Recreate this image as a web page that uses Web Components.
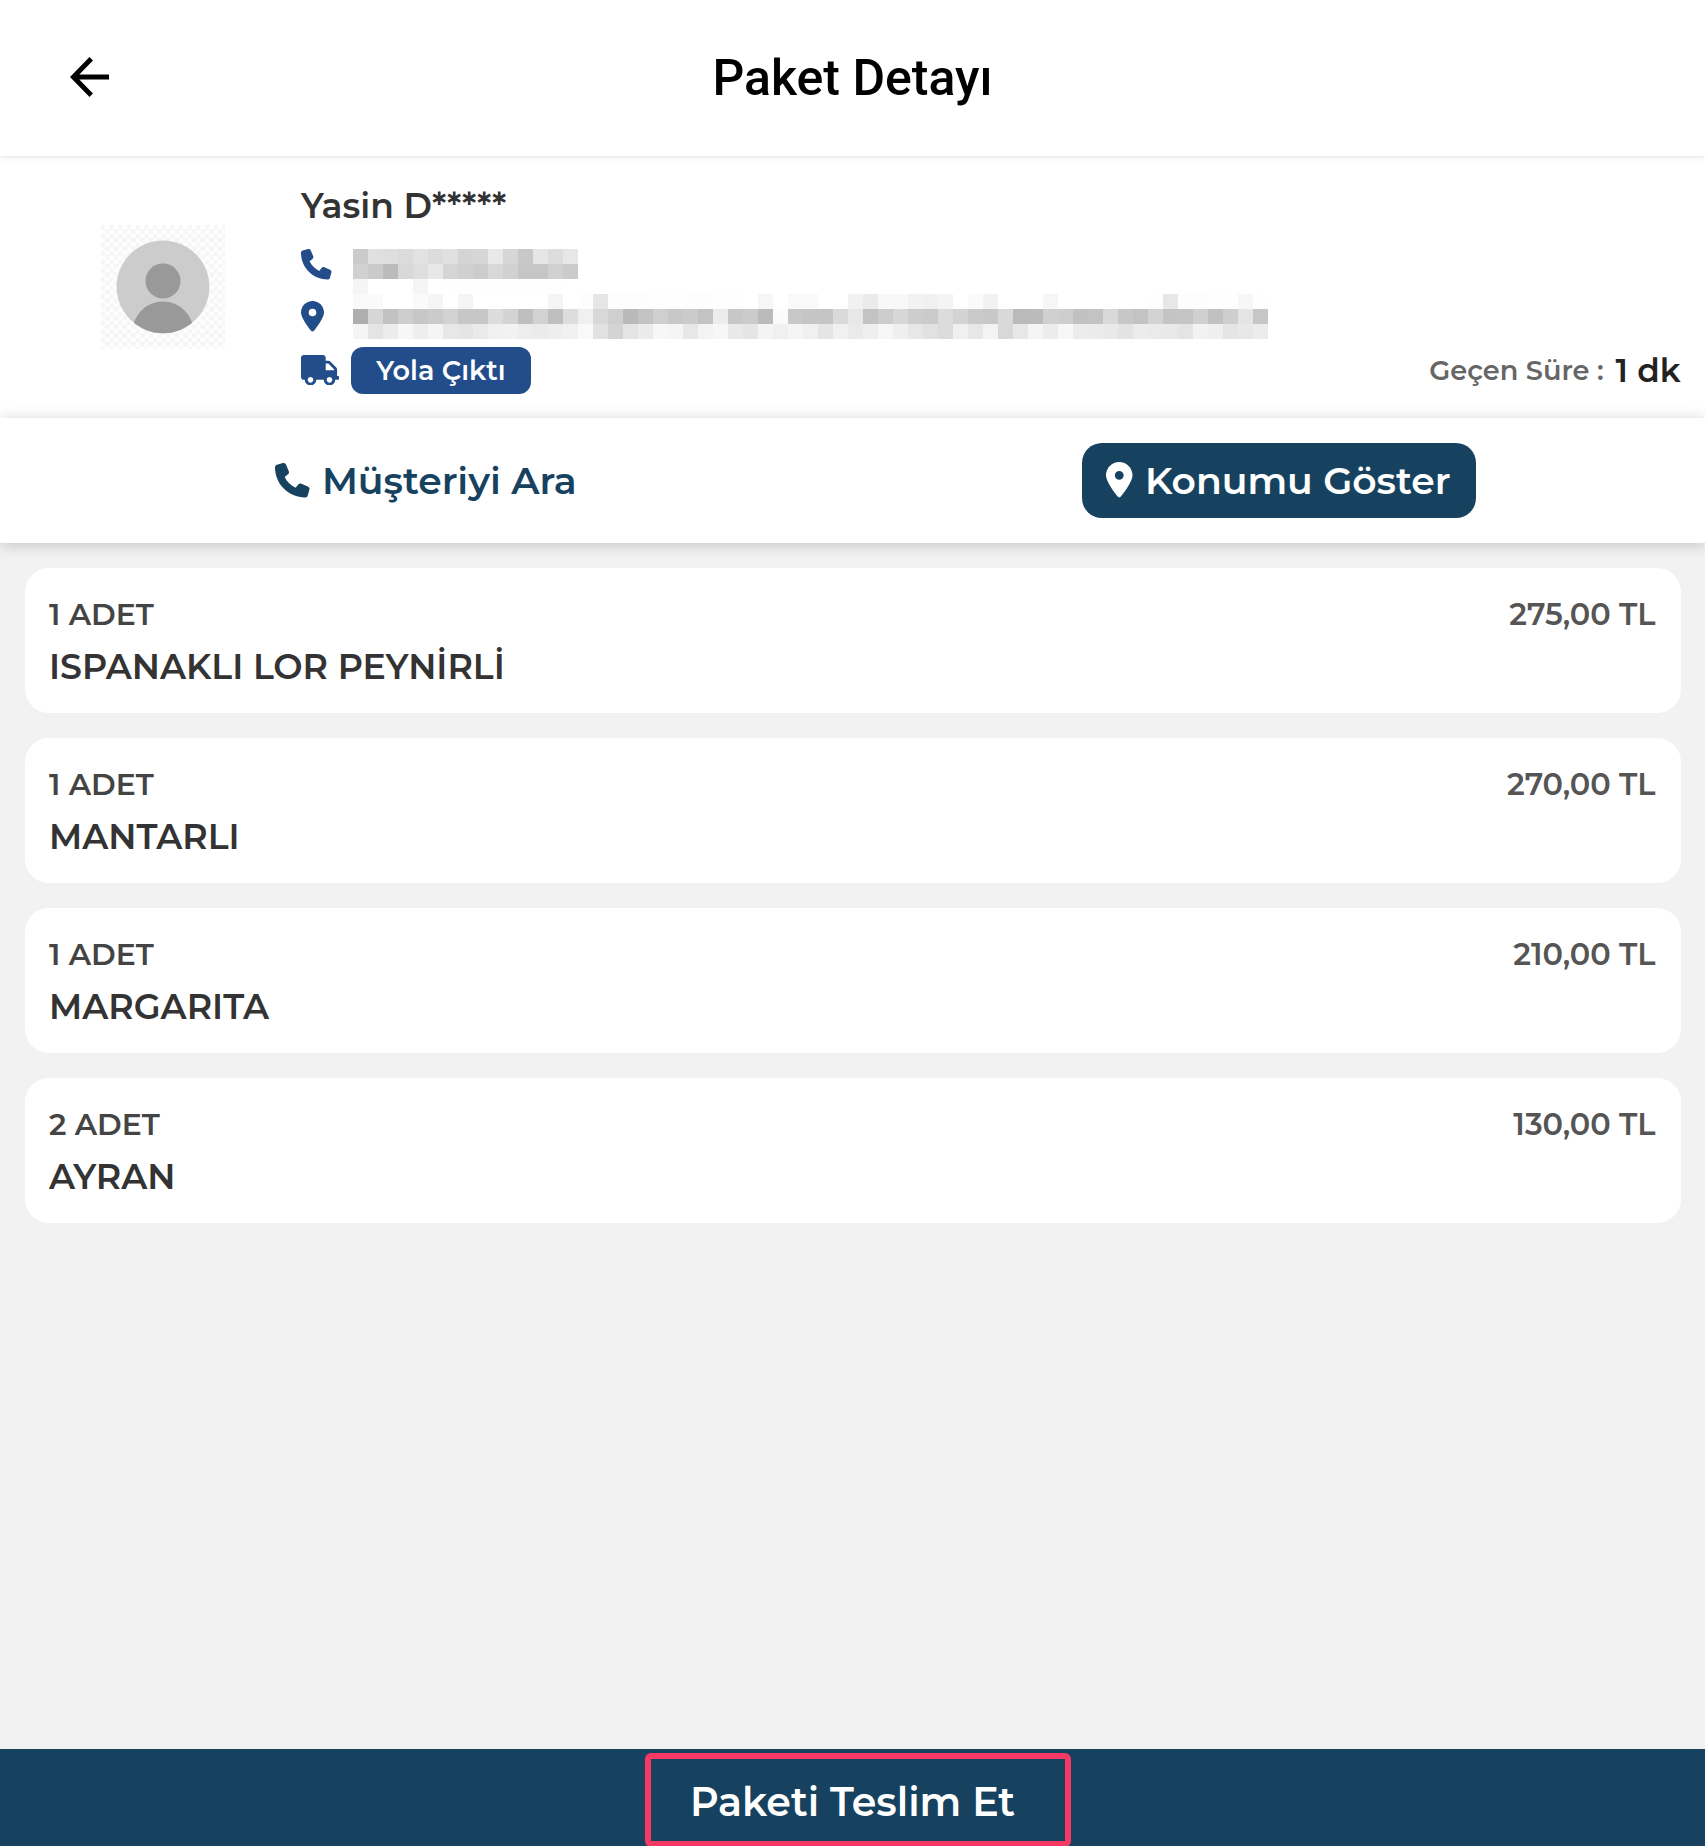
<!DOCTYPE html>
<html lang="tr">
<head>
<meta charset="utf-8">
<title>Paket Detayı</title>
<style>
	html, body {
		margin: 0;
		height: 100%;
	}
	body {
		font-family: Montserrat, Inter, sans-serif;
		font-weight: 600;
		color: #333;
		background: #f2f2f2;
		overflow: hidden;
		--navy: #17425f;
		--blue: #224c8a;
	}
</style>
</head>
<body>

<package-page>
	<page-header slot="header">Paket Detayı</page-header>
	<customer-panel slot="customer">
		<span slot="name">Yasin D*****</span>
		<span slot="status">Yola Çıktı</span>
		<span slot="label">Geçen Süre :</span>
		<span slot="time">1 dk</span>
	</customer-panel>
	<action-bar slot="actions">
		<action-button icon="phone">Müşteriyi Ara</action-button>
		<action-button icon="pin" filled>Konumu Göster</action-button>
	</action-bar>
	<order-item count="1 ADET" price="275,00 TL">ISPANAKLI LOR PEYNİRLİ</order-item>
	<order-item count="1 ADET" price="270,00 TL">MANTARLI</order-item>
	<order-item count="1 ADET" price="210,00 TL">MARGARITA</order-item>
	<order-item count="2 ADET" price="130,00 TL">AYRAN</order-item>
	<deliver-button slot="footer">Paketi Teslim Et</deliver-button>
</package-page>

<script>
(function() {
	"use strict";

	const ICONS = {
		back: {
			box: "4 4 16 16",
			path: "M20 11H7.83l5.59-5.59L12 4l-8 8 8 8 1.41-1.41L7.83 13H20z"
		},
		phone: {
			box: "0 0 512 512",
			path: "M164.9 24.6c-7.7-18.6-28-28.5-47.4-23.2l-88 24C12.1 30.2 0 46 0 64C0 311.4 200.6 512 448 512c18 0 33.8-12.1 38.6-29.5l24-88c5.3-19.4-4.6-39.7-23.2-47.4l-96-40c-16.3-6.8-35.2-2.1-46.3 11.6L304.7 368C234.3 334.7 177.3 277.7 144 207.3L193.3 167c13.7-11.2 18.4-30 11.6-46.3l-40-96z"
		},
		pin: {
			box: "0 0 384 512",
			path: "M215.7 499.2C267 435 384 279.4 384 192C384 86 298 0 192 0S0 86 0 192c0 87.4 117 243 168.3 307.2c12.3 15.3 35.1 15.3 47.4 0zM192 128a64 64 0 1 1 0 128 64 64 0 1 1 0-128z"
		},
		truck: {
			box: "0 0 640 512",
			path: "M624 352h-16V243.9c0-12.7-5.1-24.9-14.1-33.9L494 110.1c-9-9-21.2-14.1-33.9-14.1H416V48c0-26.5-21.5-48-48-48H48C21.5 0 0 21.5 0 48v320c0 26.5 21.5 48 48 48h16c0 53 43 96 96 96s96-43 96-96h128c0 53 43 96 96 96s96-43 96-96h48c8.8 0 16-7.2 16-16v-32c0-8.8-7.2-16-16-16zM160 464c-26.5 0-48-21.5-48-48s21.5-48 48-48 48 21.5 48 48-21.5 48-48 48zm320 0c-26.5 0-48-21.5-48-48s21.5-48 48-48 48 21.5 48 48-21.5 48-48 48zm80-208H416V144h44.1l99.9 99.9V256z"
		}
	};

	// one grey level per 15px cell, two hex digits each
	const MOSAIC = [
		"cbe0dedbe2dce0d4d6e9d6c8e6dde7",
		"d1cabbd8dee8d5d0ccd8d1c6c6d1cb",
		"f5fffffff5fffefefefefefefefe",
		"f9fafffffaf5fff5fffffffffff5fffde6fdfdfdfefefdfdfefefff6fff9f9fffff1ebf8f8f2f0f4fffaf2fffffff6fffffffffffffee7fdfdfefef7fefef6",
		"aed6c2cec7cbd2c7c7dcd3bfd2bfddf0d8cfb9c3cfc8cbc3ecc7cbbbfbc8c5c5dae7c3cdd7cdcbdcd3cac8d9babbd0cec1c3d9c7c3d3c4c5d0c1cee4c6",
		"f5e4ecf7eef5e7e5eaf0f2edebeef1f9e1d4e4ebf7f5e7f3f7e9e5f4f0f5f0e5f0eaeff6efe7e1dcf0e7f3d8e7f5ecf7ecebe9e3eceae9e4f2efe5e8ec"
	];

	function attach(el, html) {
		const template = document.createElement("template");
		template.innerHTML = html;
		el.attachShadow({ mode: "open" }).appendChild(template.content.cloneNode(true));
	}

	class UiIcon extends HTMLElement {
		connectedCallback() {
			const icon = ICONS[this.getAttribute("name")];
			attach(this, `
				<style>
					:host { display: block; flex: none; }
					svg { display: block; width: 100%; height: 100%; }
				</style>
				<svg viewBox="${icon.box}" preserveAspectRatio="none" fill="currentColor" fill-rule="evenodd"><path d="${icon.path}"/></svg>
			`);
		}
	}

	class PackagePage extends HTMLElement {
		connectedCallback() {
			attach(this, `
				<style>
					:host {
						display: flex;
						flex-direction: column;
						height: 100vh;
					}
					main {
						flex: 1;
						display: flex;
						flex-direction: column;
						gap: 25px;
						padding: 24.5px;
					}
				</style>
				<slot name="header"></slot>
				<slot name="customer"></slot>
				<slot name="actions"></slot>
				<main><slot></slot></main>
				<slot name="footer"></slot>
			`);
		}
	}

	class PageHeader extends HTMLElement {
		connectedCallback() {
			attach(this, `
				<style>
					:host {
						display: grid;
						grid-template-columns: 1fr auto 1fr;
						align-items: center;
						height: 156px;
						background: #fff;
						position: relative;
						z-index: 1;
						box-shadow: 0 1px 2px rgba(0, 0, 0, .07), 0 2px 9px rgba(0, 0, 0, .05);
					}
					ui-icon {
						width: 39px;
						height: 40px;
						margin: 0 0 2px 69.5px;
						color: #000;
					}
					h1 {
						margin: 0;
						font: 500 50px Roboto, sans-serif;
						color: #000;
					}
				</style>
				<ui-icon name="back"></ui-icon>
				<h1><slot></slot></h1>
			`);
		}
	}

	class UserAvatar extends HTMLElement {
		connectedCallback() {
			attach(this, `
				<style>
					:host {
						display: block;
						width: 124.5px;
						height: 124.5px;
						background: repeating-conic-gradient(#fff 0 25%, #f6f6f6 0 50%) 0 0 / 8.7px 8.7px;
					}
					svg { display: block; }
				</style>
				<svg width="124.5" height="124.5" viewBox="0 0 124.5 124.5">
					<clipPath id="face"><circle cx="62" cy="61.8" r="46.4"/></clipPath>
					<g clip-path="url(#face)">
						<rect width="124.5" height="124.5" fill="#ccc"/>
						<circle cx="62" cy="56" r="17.5" fill="#999"/>
						<circle cx="62" cy="107" r="30.5" fill="#999"/>
					</g>
				</svg>
			`);
		}
	}

	class MosaicText extends HTMLElement {
		connectedCallback() {
			let cells = "";
			MOSAIC.forEach((row, y) => {
				row.match(/../g).forEach((level, x) => {
					cells += `<rect x="${x * 15}" y="${y * 15}" width="15" height="15" fill="#${level.repeat(3)}"/>`;
				});
			});
			attach(this, `
				<style>
					:host { display: block; }
					svg { display: block; }
				</style>
				<svg width="915" height="90" shape-rendering="crispEdges">${cells}</svg>
			`);
		}
	}

	class CustomerPanel extends HTMLElement {
		connectedCallback() {
			attach(this, `
				<style>
					:host {
						display: grid;
						grid-template-columns: 276px 1fr;
						height: 261.5px;
						box-sizing: border-box;
						padding: 0 24.5px 0 25px;
						background: #fff;
					}
					user-avatar { place-self: center; }
					.info { padding-top: 20px; }
					.name {
						height: 62.5px;
						line-height: 60px;
						font-size: 34.5px;
					}
					.contact {
						display: grid;
						grid-template-columns: 52px 1fr;
						grid-template-rows: 52px 52px;
						align-items: center;
						color: var(--blue);
					}
					.contact ui-icon[name="phone"] { width: 30.5px; height: 30.5px; }
					.contact ui-icon[name="pin"] { width: 23px; height: 30.5px; }
					mosaic-text { grid-area: 1 / 2 / 3 / 3; align-self: start; margin-top: 10.5px; }
					.status {
						display: flex;
						align-items: center;
						height: 47px;
						margin-top: 4px;
						color: var(--blue);
					}
					.status ui-icon { width: 38px; height: 30.5px; }
					.badge {
						width: 180px;
						margin-left: 12px;
						line-height: 47px;
						border-radius: 12px;
						background: var(--blue);
						color: #fff;
						font-size: 27.1px;
						text-align: center;
					}
					.label {
						margin-left: auto;
						font-size: 27.2px;
						color: #666;
					}
					.time {
						margin-left: 12px;
						font-size: 32.8px;
						color: #222;
					}
				</style>
				<user-avatar></user-avatar>
				<div class="info">
					<div class="name"><slot name="name"></slot></div>
					<div class="contact">
						<ui-icon name="phone"></ui-icon>
						<mosaic-text></mosaic-text>
						<ui-icon name="pin"></ui-icon>
					</div>
					<div class="status">
						<ui-icon name="truck"></ui-icon>
						<div class="badge"><slot name="status"></slot></div>
						<div class="label"><slot name="label"></slot></div>
						<div class="time"><slot name="time"></slot></div>
					</div>
				</div>
			`);
		}
	}

	class ActionBar extends HTMLElement {
		connectedCallback() {
			attach(this, `
				<style>
					:host {
						display: grid;
						grid-template-columns: 1fr 1fr;
						place-items: center;
						height: 125.5px;
						background: #fff;
						position: relative;
						box-shadow: 0 2px 14px rgba(0, 0, 0, .2);
					}
				</style>
				<slot></slot>
			`);
		}
	}

	class ActionButton extends HTMLElement {
		connectedCallback() {
			attach(this, `
				<style>
					:host {
						display: flex;
						align-items: center;
						gap: 12px;
						height: 75.5px;
						padding: 0 25px 0 24.5px;
						border-radius: 20px;
						color: var(--navy);
						font-size: 37.7px;
					}
					:host([filled]) {
						background: var(--navy);
						color: #fff;
					}
					ui-icon { width: 34.5px; height: 34.5px; }
					ui-icon[name="pin"] { width: 26.5px; height: 35.5px; margin-bottom: 1px; }
					span { padding-top: 1px; }
				</style>
				<ui-icon name="${this.getAttribute("icon")}"></ui-icon>
				<span><slot></slot></span>
			`);
		}
	}

	class OrderItem extends HTMLElement {
		connectedCallback() {
			attach(this, `
				<style>
					:host {
						display: block;
						height: 145.2px;
						box-sizing: border-box;
						padding: 21.3px 25px 0 24.5px;
						border-radius: 24px;
						background: #fff;
						line-height: 52px;
					}
					.top {
						display: flex;
						justify-content: space-between;
						font-size: 29.9px;
						color: #444;
					}
					.price {
						font-size: 30.4px;
						color: #555;
					}
					.name { font-size: 34.8px; }
				</style>
				<div class="top">
					<span>${this.getAttribute("count")}</span>
					<span class="price">${this.getAttribute("price")}</span>
				</div>
				<div class="name"><slot></slot></div>
			`);
		}
	}

	class DeliverButton extends HTMLElement {
		connectedCallback() {
			attach(this, `
				<style>
					:host {
						display: flex;
						justify-content: center;
						height: 97px;
						background: var(--navy);
						color: #fff;
						font-size: 39.6px;
						line-height: 107px;
						position: relative;
						overflow: hidden;
					}
					/* highlight frame lies over the bar */
					.frame {
						position: absolute;
						top: 3.5px;
						left: 645px;
						width: 425.5px;
						height: 94px;
						box-sizing: border-box;
						border: 6px solid #f43964;
						border-radius: 6px;
					}
				</style>
				<slot></slot>
				<div class="frame"></div>
			`);
		}
	}

	customElements.define("ui-icon", UiIcon);
	customElements.define("user-avatar", UserAvatar);
	customElements.define("mosaic-text", MosaicText);
	customElements.define("package-page", PackagePage);
	customElements.define("page-header", PageHeader);
	customElements.define("customer-panel", CustomerPanel);
	customElements.define("action-bar", ActionBar);
	customElements.define("action-button", ActionButton);
	customElements.define("order-item", OrderItem);
	customElements.define("deliver-button", DeliverButton);
})();
</script>
</body>
</html>
